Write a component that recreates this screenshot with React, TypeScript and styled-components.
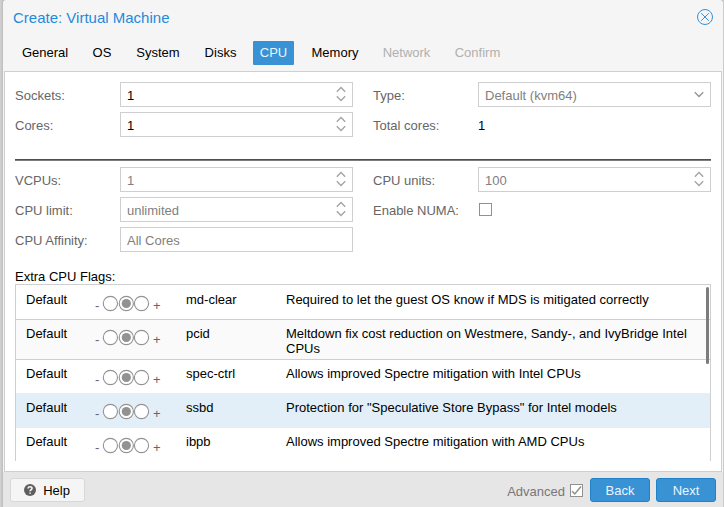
import React from 'react';
import styled, { createGlobalStyle, css } from 'styled-components';

const GlobalStyle = createGlobalStyle`
  * { box-sizing: border-box; }
  body { margin: 0; background: #c9c9c9; }
  body, button { font: 13px/17px "Liberation Sans", Arial, sans-serif; }
`;

const Backdrop = styled.div`
  width: 724px;
  height: 507px;
  padding: 0 1px 0 3px;
  overflow: hidden;
  background: linear-gradient(90deg, #d4d4d4 0, #bdbdbd 3px, #bdbdbd 722px, #d0d0d0 724px);
`;
const Window = styled.section`
  display: flex;
  flex-direction: column;
  height: 507px;
  padding: 0 1px 0 1px;
  background: #f5f5f5;
  border-radius: 3px 3px 0 0;
`;
const Header = styled.header`
  display: flex;
  align-items: center;
  justify-content: space-between;
  height: 35px;
  padding: 0 9px;
`;
const Title = styled.h1`
  margin: 1px 0 0;
  font-size: 15px;
  line-height: 20px;
  font-weight: 400;
  color: #1e8bdc;
`;
const CloseButton = styled.button`
  display: block;
  width: 16px;
  height: 16px;
  margin: -1px 0 0;
  padding: 0;
  border: 0;
  background: none;
  svg { display: block; }
`;
const TabBar = styled.nav`
  display: flex;
  height: 36px;
  padding: 6px 0 0 8px;
  gap: 5px;
`;
const Tab = styled.button<{ $w: number; $state?: 'active' | 'disabled' }>`
  width: ${p => p.$w}px;
  height: 24px;
  padding: 0 0 1px;
  border: 0;
  border-radius: 1px;
  white-space: nowrap;
  margin-left: ${p => (p.$state === 'active' ? '2px' : '0')};
  background: ${p => (p.$state === 'active' ? '#3892d4' : 'transparent')};
  color: ${p => (p.$state === 'active' ? '#e9f5ff' : p.$state === 'disabled' ? '#b0b0b0' : '#000')};
`;
const Body = styled.main`
  height: 401px;
  padding: 10px 10px 0;
  border: 1px solid #cfcfcf;
  background: #fff;
`;
const Form = styled.div`
  display: grid;
  grid-template-columns: 105px 233px 20px 105px 233px;
  grid-auto-rows: 25px;
  row-gap: 5px;
  align-items: center;
`;
const Label = styled.label<{ $second?: boolean }>`
  grid-column: ${p => (p.$second ? 4 : 1)};
  padding-top: 2px;
  color: #666;
`;
const Field = styled.div<{ $second?: boolean; $muted?: boolean }>`
  grid-column: ${p => (p.$second ? 5 : 2)};
  display: flex;
  align-items: center;
  justify-content: space-between;
  height: 25px;
  padding: 2px 6px 0;
  border: 1px solid #cfcfcf;
  color: ${p => (p.$muted ? '#808080' : '#000')};
  svg { display: block; margin-top: -3px; }
`;
const Value = styled.span`
  grid-column: 5;
  padding-top: 2px;
`;
const Divider = styled.hr`
  height: 2px;
  margin: 22px 0 6px;
  border: 0;
  border-top: 1px solid #4f4f4f;
  background: #7c7c7c;
`;
const Checkbox = styled.span<{ $inForm?: boolean }>`
  width: 13px;
  height: 13px;
  border: 1px solid #919191;
  background: #fff;
  ${p => p.$inForm && css`grid-column: 5; margin: 0 0 0 1px;`}
  svg { display: block; }
`;
const FlagsTitle = styled.div`
  margin-top: 16px;
  height: 16px;
  color: #000;
`;
const Grid = styled.div`
  position: relative;
  height: 177px;
  overflow: hidden;
  border: 1px solid #cfcfcf;
  border-bottom: 0;
`;
const Row = styled.div<{ $h: number; $top?: number; $tone?: 'alt' | 'hover'; $line?: boolean }>`
  display: grid;
  grid-template-columns: 60px 100px 100px 1fr;
  height: ${p => p.$h}px;
  padding: ${p => p.$top ?? 7}px 20px 0 10px;
  line-height: 15px;
  background: ${p => (p.$tone === 'alt' ? '#fafafa' : p.$tone === 'hover' ? '#e2eff8' : '#fff')};
  border-bottom: ${p => (p.$line ? '1px solid #cfcfcf' : '0')};
`;
const TriState = styled.div`
  display: flex;
  height: 24px;
  padding-left: 9px;
  color: #666;
`;
const Sign = styled.span<{ $plus?: boolean }>`
  width: ${p => (p.$plus ? 'auto' : '7px')};
  margin-left: ${p => (p.$plus ? '3px' : '0')};
  padding-top: 6px;
`;
const ScrollThumb = styled.span`
  position: absolute;
  top: 2px;
  right: 1px;
  width: 3px;
  height: 77px;
  border-radius: 2px;
  background: #7b7d7d;
`;
const Footer = styled.footer`
  display: flex;
  align-items: center;
  height: 35px;
  padding: 1px 7px 0 6px;
  background: #e6e6e6;
  margin: 0 -1px;
`;
const Button = styled.button<{ $primary?: boolean }>`
  display: flex;
  align-items: center;
  justify-content: center;
  width: ${p => (p.$primary ? 60 : 75)}px;
  height: 24px;
  padding: 1px 0 0;
  margin-left: ${p => (p.$primary ? 6 : 1)}px;
  border: 1px solid ${p => (p.$primary ? '#2080c8' : '#d8d8d8')};
  border-radius: 3px;
  background: ${p => (p.$primary ? '#3892d4' : '#f5f5f5')};
  color: ${p => (p.$primary ? '#e9f5ff' : '#000')};
  svg { margin: -1px 7px 0 -1px; }
`;
const Advanced = styled.label`
  display: flex;
  align-items: center;
  gap: 5px;
  margin-left: auto;
  padding-right: 1px;
  color: #777;
`;
const AdvancedText = styled.span`
  padding-top: 2px;
`;

const Spinner = () => (
  <svg width="10" height="16" viewBox="0 0 10 16" fill="none" stroke="#a2a2a2" strokeWidth="1.3">
    <path d="M.8 5.7 5 1.5l4.2 4.2M.8 10.3 5 14.5l4.2-4.2" />
  </svg>
);
const Chevron = () => (
  <svg width="10" height="7" viewBox="0 0 10 7" fill="none" stroke="#929292" strokeWidth="1.3">
    <path d="M.8 1.3 5 5.5l4.2-4.2" />
  </svg>
);
const Radios = () => (
  <svg width="48" height="24" viewBox="0 0 48 24" fill="#fff" stroke="#929292" strokeWidth="1.1">
    <circle cx="8.4" cy="11.5" r="7.1" />
    <circle cx="39.5" cy="11.5" r="7.1" />
    <circle cx="24.3" cy="11.5" r="7.1" />
    <circle cx="24.3" cy="11.5" r="4.6" fill="#929292" stroke="none" />
  </svg>
);

const tabs: { name: string; w: number; state?: 'active' | 'disabled' }[] = [
  { name: 'General', w: 66 },
  { name: 'OS', w: 38 },
  { name: 'System', w: 64 },
  { name: 'Disks', w: 51 },
  { name: 'CPU', w: 41, state: 'active' },
  { name: 'Memory', w: 72 },
  { name: 'Network', w: 61, state: 'disabled' },
  { name: 'Confirm', w: 71, state: 'disabled' },
];

const flags: { name: string; text: string; h: number; top?: number; tone?: 'alt' | 'hover'; line?: boolean }[] = [
  { name: 'md-clear', text: 'Required to let the guest OS know if MDS is mitigated correctly', h: 35, line: true },
  { name: 'pcid', text: 'Meltdown fix cost reduction on Westmere, Sandy-, and IvyBridge Intel CPUs', h: 40, top: 6, tone: 'alt', line: true },
  { name: 'spec-ctrl', text: 'Allows improved Spectre mitigation with Intel CPUs', h: 33, top: 6 },
  { name: 'ssbd', text: 'Protection for "Speculative Store Bypass" for Intel models', h: 35, tone: 'hover' },
  { name: 'ibpb', text: 'Allows improved Spectre mitigation with AMD CPUs', h: 34, top: 6 },
];

export default function App() {
  return (
    <>
      <GlobalStyle />
      <Backdrop>
        <Window>
          <Header>
            <Title>Create: Virtual Machine</Title>
            <CloseButton aria-label="Close">
              <svg width="16" height="16" viewBox="0 0 16 16" fill="none" stroke="#3892d4" strokeWidth="1">
                <circle cx="8" cy="8" r="7.5" />
                <path d="m4.2 4.2 7.6 7.6m0-7.6-7.6 7.6" />
              </svg>
            </CloseButton>
          </Header>
          <TabBar>
            {tabs.map(t => <Tab key={t.name} $w={t.w} $state={t.state}>{t.name}</Tab>)}
          </TabBar>
          <Body>
            <Form>
              <Label>Sockets:</Label>
              <Field>1<Spinner /></Field>
              <Label $second>Type:</Label>
              <Field $second $muted>Default (kvm64)<Chevron /></Field>
              <Label>Cores:</Label>
              <Field>1<Spinner /></Field>
              <Label $second>Total cores:</Label>
              <Value>1</Value>
            </Form>
            <Divider />
            <Form>
              <Label>VCPUs:</Label>
              <Field $muted>1<Spinner /></Field>
              <Label $second>CPU units:</Label>
              <Field $second $muted>100<Spinner /></Field>
              <Label>CPU limit:</Label>
              <Field $muted>unlimited<Spinner /></Field>
              <Label $second>Enable NUMA:</Label>
              <Checkbox $inForm />
              <Label>CPU Affinity:</Label>
              <Field $muted>All Cores</Field>
            </Form>
            <FlagsTitle>Extra CPU Flags:</FlagsTitle>
            <Grid>
              {flags.map(f => (
                <Row key={f.name} $h={f.h} $top={f.top} $tone={f.tone} $line={f.line}>
                  <span>Default</span>
                  <TriState><Sign>-</Sign><Radios /><Sign $plus>+</Sign></TriState>
                  <span>{f.name}</span>
                  <span>{f.text}</span>
                </Row>
              ))}
              <ScrollThumb />
            </Grid>
          </Body>
          <Footer>
            <Button>
              <svg width="12" height="12" viewBox="0 0 12 12">
                <circle cx="6" cy="6" r="6" fill="#5f5f5f" />
                <path d="M4 4.5C4.2 2.2 8 2.3 8 4.4 8 5.8 6.1 5.7 6.1 7.2M6.1 8.4v1.4" fill="none" stroke="#f5f5f5" strokeWidth="1.6" />
              </svg>
              Help
            </Button>
            <Advanced>
              <AdvancedText>Advanced</AdvancedText>
              <Checkbox>
                <svg width="11" height="11" viewBox="0 0 11 11" fill="none" stroke="#919191" strokeWidth="1.5">
                  <path d="m1 6.2 2.8 2.7L10 1.5" />
                </svg>
              </Checkbox>
            </Advanced>
            <Button $primary>Back</Button>
            <Button $primary>Next</Button>
          </Footer>
        </Window>
      </Backdrop>
    </>
  );
}
